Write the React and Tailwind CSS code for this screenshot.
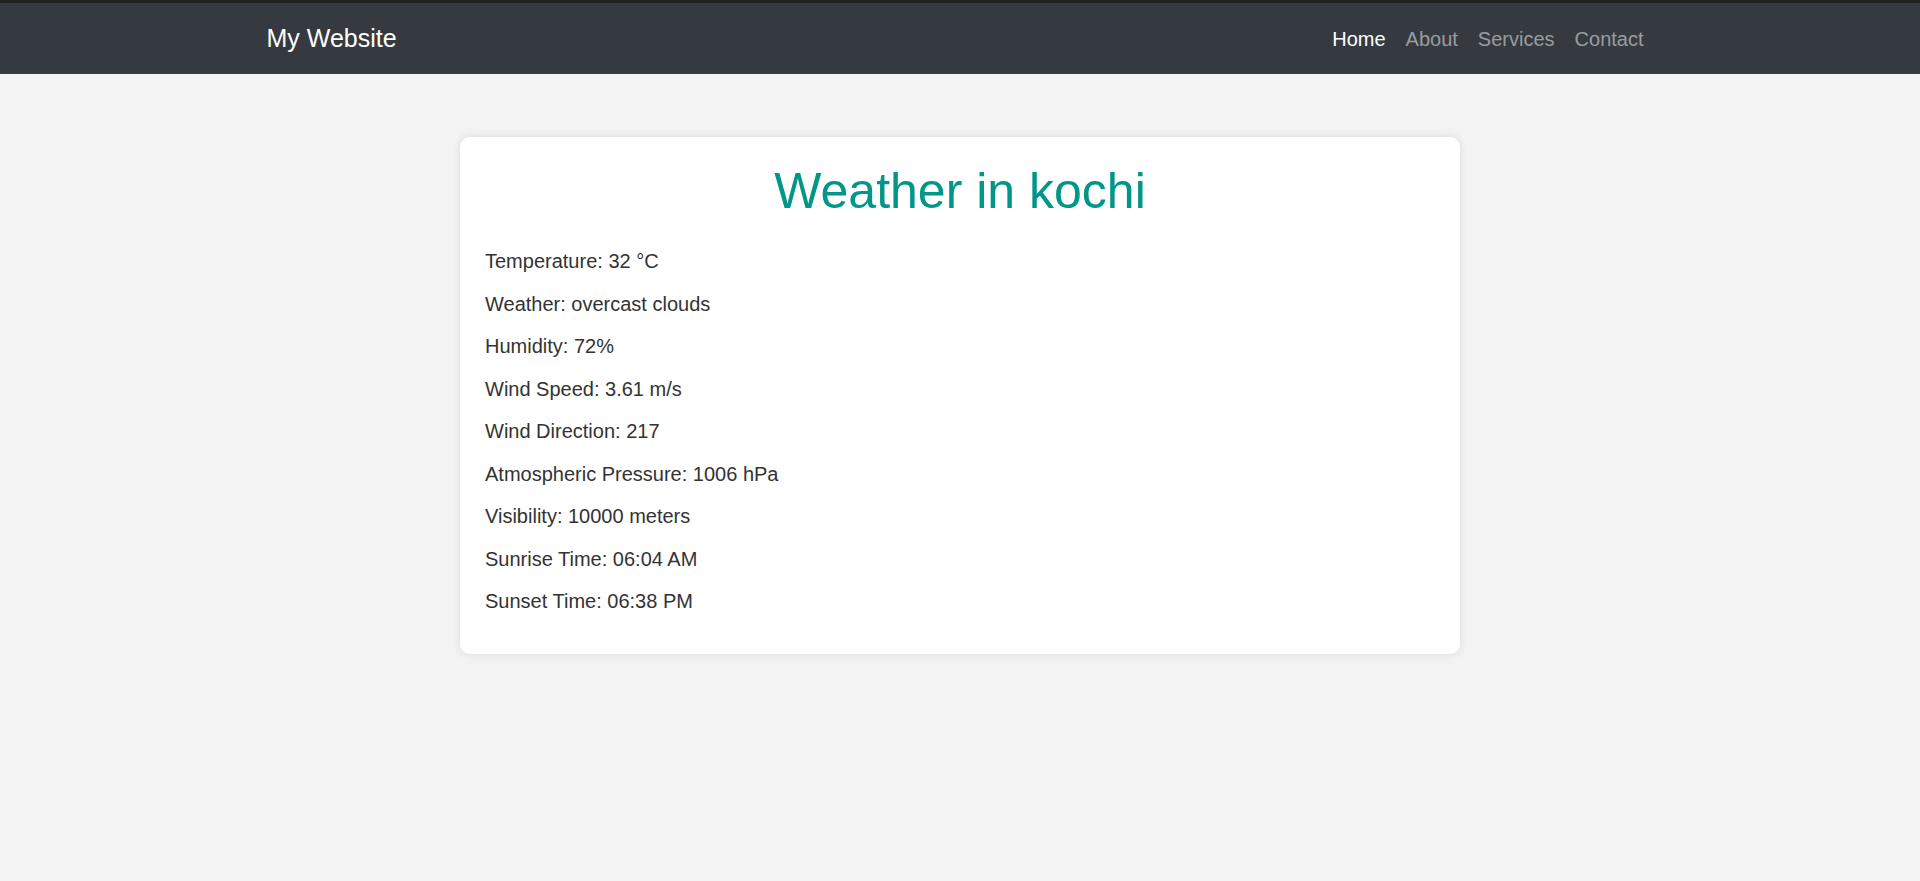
const weather = [
  "Temperature: 32 °C",
  "Weather: overcast clouds",
  "Humidity: 72%",
  "Wind Speed: 3.61 m/s",
  "Wind Direction: 217",
  "Atmospheric Pressure: 1006 hPa",
  "Visibility: 10000 meters",
  "Sunrise Time: 06:04 AM",
  "Sunset Time: 06:38 PM",
];

function Navbar() {
  return (
    <nav className="h-[74px] bg-[#343a40] border-t-[3px] border-[#222222]">
      <div className="max-w-[1425px] h-full mx-auto px-[19px] flex items-center justify-between">
        <a href="#" className="text-[25px] text-white">My Website</a>
        <ul className="flex text-[20px]">
          <li><a href="#" className="px-[10px] text-white">Home</a></li>
          <li><a href="#" className="px-[10px] text-white/50">About</a></li>
          <li><a href="#" className="px-[10px] text-white/50">Services</a></li>
          <li><a href="#" className="px-[10px] text-white/50">Contact</a></li>
        </ul>
      </div>
    </nav>
  );
}

export default function App() {
  return (
    <div className="min-h-screen bg-[#f3f3f3] font-['Liberation_Sans',Arial,sans-serif] text-[#333333]">
      <Navbar />

      {/* Weather card */}
      <main className="pt-[63px]">
        <div className="w-[1000px] mx-auto bg-white rounded-[10px] px-[25px] pt-[24px] pb-[38px] shadow-[0_0_10px_rgba(0,0,0,0.1)]">
          <h1 className="text-center text-[50px] leading-[60px] text-[#009688]">Weather in kochi</h1>
          <div className="mt-[25px] flex flex-col gap-[12.5px]">
            {weather.map((item) => (
              <p key={item} className="text-[20px] leading-[30px]">{item}</p>
            ))}
          </div>
        </div>
      </main>
    </div>
  );
}
